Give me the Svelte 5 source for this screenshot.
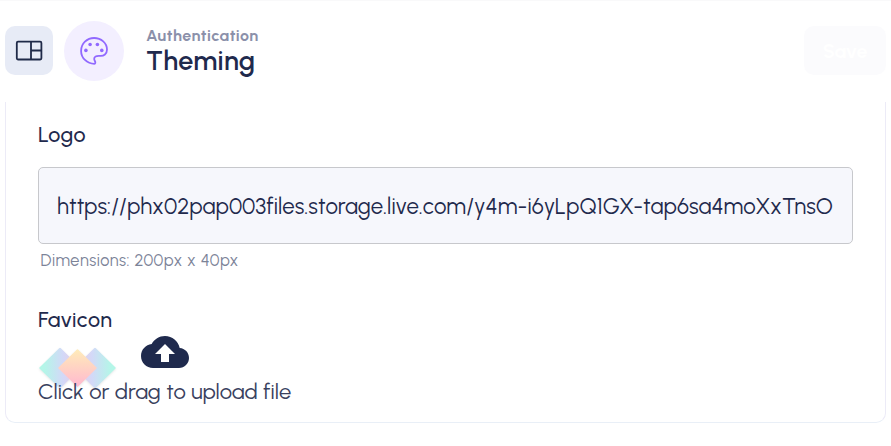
<script>
  const logoUrl = 'https://phx02pap003files.storage.live.com/y4m-i6yLpQ1GX-tap6sa4moXxTnsO';
</script>

<div class="page">
  <header>
    <button class="toggle" aria-label="Toggle panel">
      <svg width="28" height="22" viewBox="0 0 28 22" fill="none" stroke="#1f2a48" stroke-width="1.8">
        <rect x="1.8" y="1.7" width="24.6" height="17.8" rx="1.2" />
        <path d="M16 1.7V19.5M16 10.5H26.4" />
      </svg>
    </button>
    <div class="badge">
      <svg width="28" height="28" viewBox="0 0 28 28">
        <path
          d="M14.4 26.9C7 26.6 1.1 21 1.1 13.9C1.1 6.6 7 1 14.1 1C21.2 1 27 6 27 12.5C27 17 23.8 19.2 20 18.9C16 18.6 14 19.8 14.2 22C14.4 24 15.6 24.3 15.3 25.9C15.2 26.6 14.9 26.9 14.4 26.9Z"
          fill="none" stroke="#9169ff" stroke-width="1.8" />
        <g fill="#9169ff">
          <circle cx="5.9" cy="13.4" r="1.8" />
          <circle cx="10.1" cy="7.5" r="1.8" />
          <circle cx="17.4" cy="7.5" r="1.8" />
          <circle cx="21.8" cy="13.4" r="1.8" />
        </g>
      </svg>
    </div>
    <div class="titles">
      <div class="section">Authentication</div>
      <h1>Theming</h1>
    </div>
    <button class="save" disabled>Save</button>
  </header>

  <main>
    <h2 class="logo-label">Logo</h2>
    <div class="field"><div class="value">{logoUrl}</div></div>
    <p class="hint">Dimensions: 200px x 40px</p>
    <h2 class="fav-label">Favicon</h2>
    <div class="images">
      <svg class="mark" width="80" height="46" viewBox="0 0 80 46">
        <defs>
          <linearGradient id="left"><stop offset=".1" stop-color="#b4f6e8" /><stop offset=".58" stop-color="#d3d8f8" /><stop offset="1" stop-color="#efcbdd" /></linearGradient>
          <linearGradient id="right"><stop offset="0" stop-color="#efcbdd" /><stop offset=".42" stop-color="#d3d8f8" /><stop offset=".9" stop-color="#b4f6e8" /></linearGradient>
          <linearGradient id="mid" x2="0" y2="1"><stop offset="0" stop-color="#ffebb9" /><stop offset="1" stop-color="#ffb9cf" /></linearGradient>
        </defs>
        <g stroke-width="1.5" stroke-linejoin="round">
          <path d="M2 22L22 2.5L42 22L22 41.5Z" fill="url(#left)" stroke="url(#left)" />
          <path d="M37 22L57 2.5L77 22L57 41.5Z" fill="url(#right)" stroke="url(#right)" />
          <path d="M21 22L39.5 4L58 22L39.5 40Z" fill="url(#mid)" stroke="url(#mid)" />
        </g>
      </svg>
      <svg class="cloud" width="48" height="48" viewBox="0 0 24 24" fill="#1f2a4d">
        <path d="M19.35 10.04C18.67 6.59 15.64 4 12 4 9.11 4 6.6 5.64 5.35 8.04 2.34 8.36 0 10.91 0 14c0 3.31 2.69 6 6 6h13c2.76 0 5-2.24 5-5 0-2.64-2.05-4.78-4.65-4.96zM14 13v4h-4v-4H7l5-5 5 5h-3z" />
      </svg>
    </div>
    <p class="upload">Click or drag to upload file</p>
  </main>
</div>

<style>
  :global(body) { margin: 0; background: #fff; overflow: hidden; }
  .page {
    box-sizing: border-box;
    width: 891px;
    height: 446px;
    border-top: 1px solid #f9f9fa;
    font-family: Urbanist, Lato, sans-serif;
    color: #1f2a4d;
  }
  h1, h2, p { margin: 0; white-space: nowrap; }
  svg { display: block; }
  header { display: flex; align-items: center; box-sizing: border-box; height: 101px; padding: 0 5px 1px; }
  button { border: 0; padding: 0; font-family: inherit; }
  .toggle { width: 48px; height: 49px; margin-top: -1px; border-radius: 10px; background: #e7ebf6; display: grid; place-items: center; }
  .badge { width: 60px; height: 60px; margin-left: 11px; border-radius: 50%; background: #f3efff; display: grid; place-items: center; }
  .titles { margin-left: 22px; flex: 1; }
  .section { font-size: 16px; line-height: 20px; font-weight: 700; letter-spacing: .5px; color: #8b90aa; }
  h1 { font-size: 27px; line-height: 30px; font-weight: 650; letter-spacing: .3px; }
  .save { width: 82px; height: 49px; margin-top: -1px; border-radius: 10px; background: #fbfbfd; color: #fff; font-size: 19.5px; font-weight: 700; }
  main {
    box-sizing: border-box;
    width: 881px;
    height: 321px;
    margin-left: 5px;
    padding: 20px 32px 0;
    border: 1px solid #ecebf7;
    border-top: 0;
    border-bottom-color: #e9eff7;
    border-radius: 0 0 10px 10px;
  }
  h2 { font-size: 21.5px; line-height: 26px; font-weight: 550; letter-spacing: .4px; }
  .field {
    box-sizing: border-box;
    height: 77px;
    margin-top: 19px;
    padding: 2px 18px 0;
    border: 1px solid #c7c8cc;
    border-radius: 5px;
    background: #f6f7fc;
    display: flex;
    align-items: center;
  }
  .value { font-size: 22.2px; line-height: 32px; letter-spacing: .08px; white-space: nowrap; }
  .hint { margin: 6px 0 0 2.5px; font-size: 16.3px; line-height: 22px; letter-spacing: .54px; color: #7c8398; }
  .fav-label { margin-top: 35px; }
  .images { display: flex; align-items: flex-start; height: 49px; margin-top: -5px; }
  .mark { margin-top: 18px; filter: drop-shadow(0 1px 1px #00000018); }
  .cloud { margin-left: 23px; }
  .upload { position: relative; font-size: 22px; line-height: 30px; font-weight: 400; letter-spacing: .06px; color: #39415e; }
</style>
